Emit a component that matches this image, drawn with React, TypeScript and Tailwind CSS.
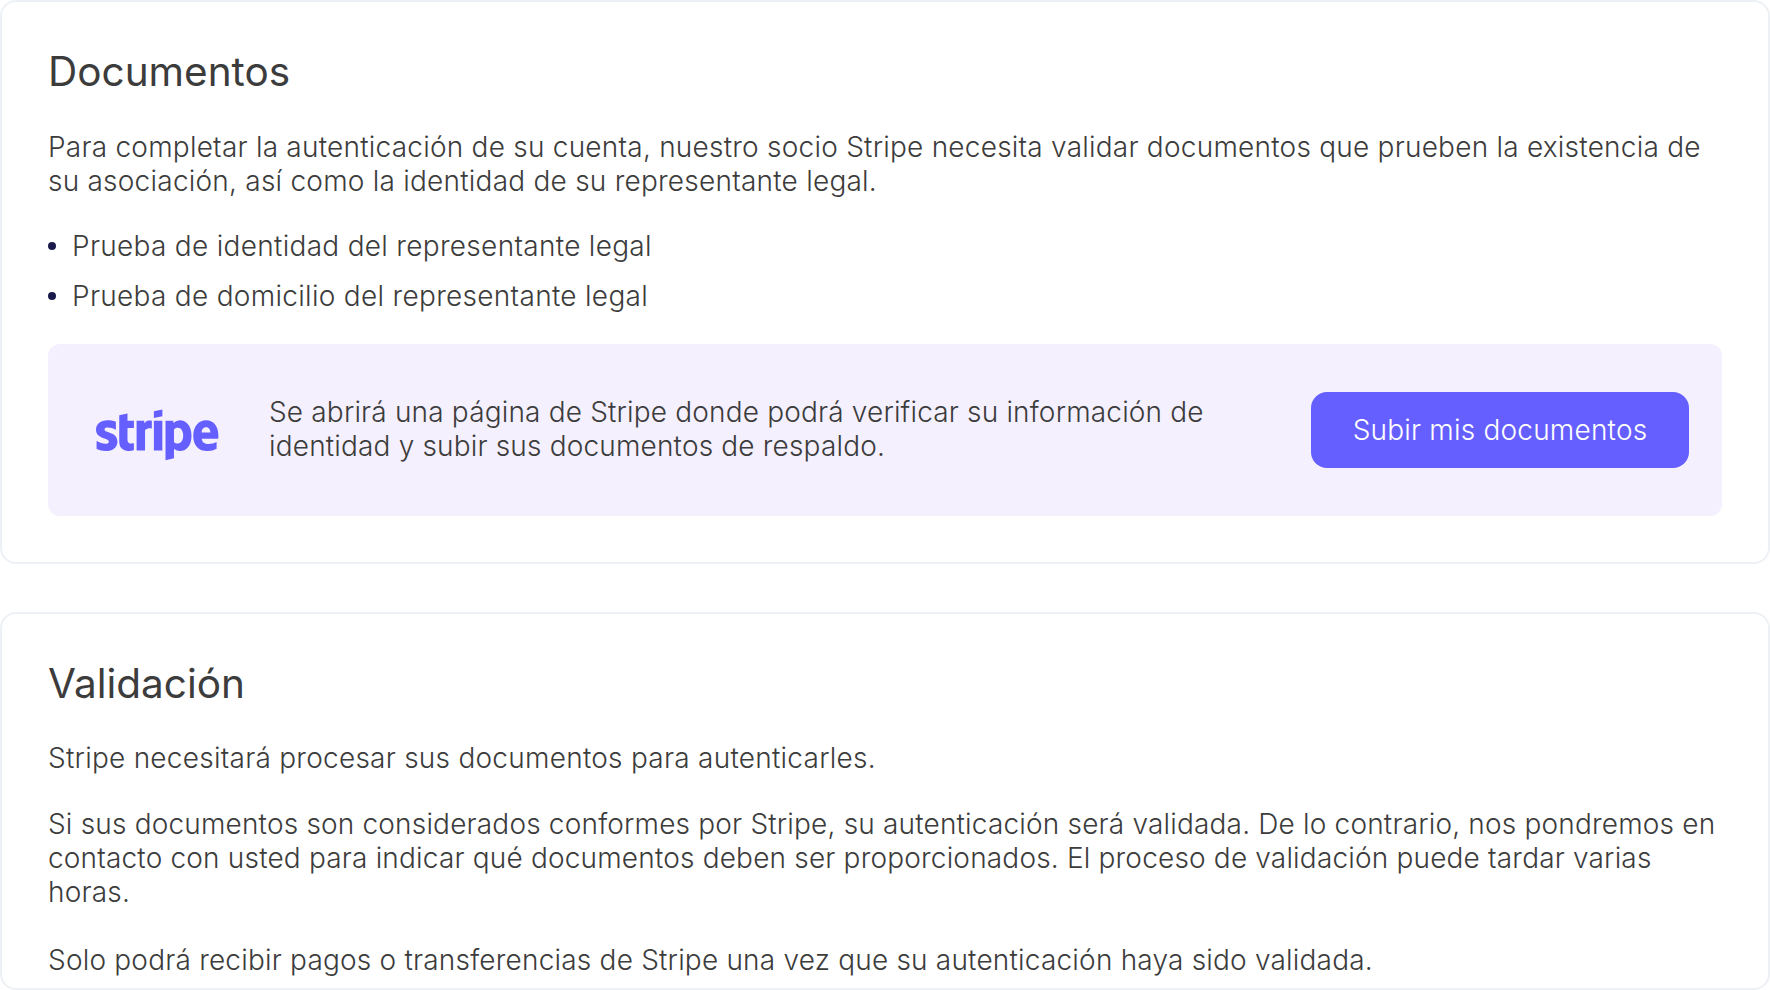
import * as React from 'react';

function StripeLogo() {
  return (
    <svg viewBox="0 0 60 25" className="w-[123px] h-[52px] mt-[9px] shrink-0" fill="#665fff">
      <path fillRule="evenodd" d="M59.64 14.28h-8.06c.19 1.93 1.6 2.55 3.2 2.55 1.64 0 2.96-.37 4.05-.95v3.32a8.33 8.33 0 0 1-4.56 1.1c-4.01 0-6.83-2.5-6.83-7.48 0-4.19 2.39-7.52 6.3-7.52 3.92 0 5.96 3.28 5.96 7.5 0 .4-.04 1.26-.06 1.48zm-5.92-5.62c-1.03 0-2.17.73-2.17 2.58h4.25c0-1.85-1.07-2.58-2.08-2.58zM40.95 20.3c-1.44 0-2.32-.6-2.9-1.04l-.02 4.63-4.12.87V5.57h3.76l.08 1.02a4.7 4.7 0 0 1 3.23-1.29c2.9 0 5.62 2.6 5.62 7.4 0 5.23-2.7 7.6-5.65 7.6zM40 8.95c-.95 0-1.54.34-1.97.81l.02 6.12c.4.44.98.78 1.95.78 1.52 0 2.54-1.65 2.54-3.87 0-2.15-1.04-3.84-2.54-3.84zM28.24 5.57h4.13v14.44h-4.13V5.57zm0-4.7L32.37 0v3.36l-4.13.88V.88zm-4.32 9.35v9.79H19.8V5.57h3.7l.12 1.22c1-1.77 3.07-1.41 3.62-1.22v3.79c-.52-.17-2.29-.43-3.32.86zm-8.55 4.72c0 2.43 2.6 1.68 3.12 1.46v3.36c-.55.3-1.54.54-2.89.54a4.15 4.15 0 0 1-4.27-4.24l.01-13.17 4.02-.86v3.54h3.14V9.1h-3.13v5.85zm-4.91.7c0 2.97-2.31 4.66-5.73 4.66a11.2 11.2 0 0 1-4.46-.93v-3.93c1.38.75 3.1 1.31 4.46 1.31.92 0 1.53-.24 1.53-1C6.26 13.77 0 14.51 0 9.95 0 7.04 2.28 5.3 5.62 5.3c1.36 0 2.72.2 4.09.75v3.88a9.23 9.23 0 0 0-4.1-1.06c-.86 0-1.44.25-1.44.9 0 1.85 6.29.97 6.29 5.88z" />
    </svg>
  );
}

export default function App() {
  return (
    <div className="w-[1770px] h-[990px] overflow-hidden bg-white font-['Inter',sans-serif] text-[#3c3c3c] text-[28px] leading-[34px] font-[360] tracking-[0.2px]">
      <section className="border-2 border-[#edf0f4] rounded-2xl px-[46px] pt-[44px] h-[564px]">
        <h2 className="text-[40.5px] leading-[52px] font-normal tracking-normal">Documentos</h2>
        <p className="mt-[32px] tracking-[0.23px]">
          Para completar la autenticación de su cuenta, nuestro socio Stripe necesita validar documentos que prueben la existencia de su asociación, así como la identidad de su representante legal.
        </p>
        <ul className="mt-[31px] flex flex-col gap-[16px] list-none tracking-[0.3px]">
          <li className="flex items-center gap-[16px]"><span className="w-[8px] h-[8px] rounded-full bg-[#1b1b4b]"></span>Prueba de identidad del representante legal</li>
          <li className="flex items-center gap-[16px]"><span className="w-[8px] h-[8px] rounded-full bg-[#1b1b4b]"></span>Prueba de domicilio del representante legal</li>
        </ul>
        <div className="mt-[31px] bg-[#f4f0fe] rounded-xl h-[172px] pl-[48px] pr-[33px] flex items-center">
          <StripeLogo />
          <p className="ml-[50px] w-[960px] pb-[2px] tracking-[0.17px]">Se abrirá una página de Stripe donde podrá verificar su información de identidad y subir sus documentos de respaldo.</p>
          <button className="ml-auto w-[378px] h-[76px] rounded-2xl bg-[#665fff] text-white">Subir mis documentos</button>
        </div>
      </section>
      <section className="mt-[48px] border-2 border-[#edf0f4] rounded-2xl px-[46px] pt-[44px] h-[378px]">
        <h2 className="text-[40.5px] leading-[52px] font-normal tracking-normal">Validación</h2>
        <p className="mt-[31px] tracking-[0.25px]">Stripe necesitará procesar sus documentos para autenticarles.</p>
        <p className="mt-[32px] tracking-[0.18px]">Si sus documentos son considerados conformes por Stripe, su autenticación será validada. De lo contrario, nos pondremos en contacto con usted para indicar qué documentos deben ser proporcionados. El proceso de validación puede tardar varias horas.</p>
        <p className="mt-[34px]">Solo podrá recibir pagos o transferencias de Stripe una vez que su autenticación haya sido validada.</p>
      </section>
    </div>
  );
}
